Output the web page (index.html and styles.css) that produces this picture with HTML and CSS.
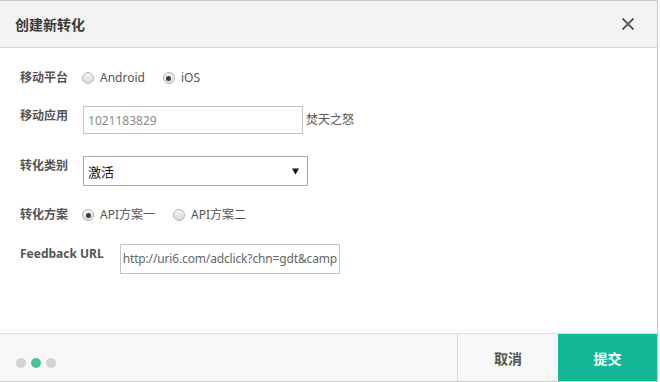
FILE: index.html
```html
<!DOCTYPE html>
<html lang="zh">
<head>
<meta charset="utf-8">
<title>创建新转化</title>
<link rel="stylesheet" href="styles.css">
</head>
<body>
<div class="dialog">
  <div class="dialog-header">
    <h1 class="dialog-title">创建新转化</h1>
    <button class="close-btn" aria-label="关闭">
      <svg width="14" height="14" viewBox="0 0 14 14"><path d="M1.5 1.5 L12.5 12.5 M12.5 1.5 L1.5 12.5" stroke="#5a5a5a" stroke-width="1.8" fill="none"/></svg>
    </button>
  </div>
  <div class="dialog-body">
    <div class="row row-center">
      <span class="label">移动平台</span>
      <label class="radio"><span class="radio-dot"></span><span class="radio-text">Android</span></label>
      <label class="radio"><span class="radio-dot checked"></span><span class="radio-text">iOS</span></label>
    </div>
    <div class="row row-app">
      <span class="label">移动应用</span>
      <div class="input app-input">1021183829</div>
      <span class="app-name">焚天之怒</span>
    </div>
    <div class="row row-type">
      <span class="label">转化类别</span>
      <div class="select"><span class="select-text">激活</span>
        <svg class="select-arrow" width="7" height="7" viewBox="0 0 7 7"><path d="M0 0.5 H7 L3.5 6.5 Z" fill="#111"/></svg>
      </div>
    </div>
    <div class="row row-center row-plan">
      <span class="label">转化方案</span>
      <label class="radio"><span class="radio-dot checked"></span><span class="radio-text">API方案一</span></label>
      <label class="radio"><span class="radio-dot"></span><span class="radio-text">API方案二</span></label>
    </div>
    <div class="row row-url">
      <span class="label">Feedback URL</span>
      <div class="input url-input">http://uri6.com/adclick?chn=gdt&amp;camp</div>
    </div>
  </div>
  <div class="dialog-footer">
    <div class="steps">
      <span class="step"></span>
      <span class="step active"></span>
      <span class="step"></span>
    </div>
    <div class="actions">
      <button class="btn btn-cancel">取消</button>
      <button class="btn btn-submit">提交</button>
    </div>
  </div>
</div>
</body>
</html>
```

FILE: styles.css
```css
* { box-sizing: border-box; }
html, body { margin: 0; padding: 0; background: #fff; }
body {
  font-family: "Noto Sans", "Noto Sans CJK SC", sans-serif;
  font-size: 12px;
  color: #555;
}
.dialog {
  width: 658px;
  height: 382px;
  border-top: 1px solid #c9c9c9;
  border-right: 1px solid #c9c9c9;
  border-bottom: 1px solid #c9c9c9;
  display: flex;
  flex-direction: column;
  background: #fff;
}
.dialog-header {
  height: 47px;
  background: #f3f3f3;
  border-bottom: 1px solid #d3d3d3;
  display: flex;
  align-items: center;
  justify-content: space-between;
  padding: 0 22px 0 15px;
}
.dialog-title {
  margin: 0;
  font-family: "Noto Sans CJK SC", sans-serif;
  font-size: 14px;
  font-weight: bold;
  color: #3a3a3a;
  line-height: 20px;
}
.close-btn {
  border: 0;
  background: none;
  padding: 0;
  width: 14px;
  height: 14px;
  display: flex;
  cursor: pointer;
}
.dialog-body {
  flex: 1;
  padding: 20px 20px 0 20px;
  display: flex;
  flex-direction: column;
}
.row { display: flex; align-items: flex-start; }
.row-center { align-items: center; height: 20px; }
.row-app { margin-top: 18px; }
.row-type { margin-top: 22px; }
.row-plan { margin-top: 19px; }
.row-url { margin-top: 19px; }
.label {
  font-family: "Noto Sans", "Noto Sans CJK SC", sans-serif;
  font-weight: bold;
  font-size: 12px;
  line-height: 20px;
  color: #555;
  margin-right: 15px;
  white-space: nowrap;
}
.row-center .label { margin-right: 14px; }
.row-url .label { margin-right: 16px; }
.radio {
  display: flex;
  align-items: center;
  margin-right: 18px;
}
.radio-dot {
  width: 12px;
  height: 12px;
  border-radius: 50%;
  border: 1px solid #b5b5b5;
  background: linear-gradient(#f4f4f4, #dcdcdc);
  margin-right: 6px;
  position: relative;
}
.radio-dot.checked::after {
  content: "";
  position: absolute;
  left: 2.5px;
  top: 2.5px;
  width: 5px;
  height: 5px;
  border-radius: 50%;
  background: #3d3d3d;
}
.radio-text {
  font-size: 12px;
  color: #555;
  line-height: 20px;
}
.input {
  border: 1px solid #c4c4c4;
  background: #fff;
  overflow: hidden;
  white-space: nowrap;
  font-size: 12px;
}
.app-input {
  width: 220px;
  height: 28px;
  padding: 6px 4px;
  line-height: 16px;
  color: #8a8a8a;
}
.app-name {
  margin-left: 3px;
  line-height: 28px;
  font-size: 12px;
  color: #555;
}
.select {
  width: 225px;
  height: 30px;
  border: 1px solid #a9a9a9;
  display: flex;
  align-items: center;
  justify-content: space-between;
  padding: 0 8px 0 4px;
  color: #111;
}
.select-text { font-family: "Noto Sans CJK SC", sans-serif; font-size: 13px; }
.select-arrow { display: block; }
.url-input {
  width: 220px;
  height: 30px;
  padding: 6px 2px;
  line-height: 16px;
  color: #666;
  font-size: 12px;
  letter-spacing: -0.15px;
}
.dialog-footer {
  height: 48px;
  border-top: 1px solid #dcdcdc;
  background: #f8f8f8;
  display: flex;
  align-items: stretch;
  justify-content: space-between;
}
.steps {
  display: flex;
  align-items: center;
  gap: 5px;
  padding: 10px 0 0 16px;
}
.step {
  width: 10px;
  height: 10px;
  border-radius: 50%;
  background: #d3d3d3;
}
.step.active { background: #4ebf9f; }
.actions { display: flex; }
.btn {
  border: 0;
  margin: 0;
  font-family: "Noto Sans CJK SC", sans-serif;
  font-size: 14px;
  font-weight: bold;
  cursor: pointer;
}
.btn-cancel {
  width: 101px;
  background: #f8f8f8;
  border-left: 1px solid #dcdcdc;
  color: #555;
}
.btn-submit {
  width: 99px;
  background: #14b897;
  color: #fff;
}
```
